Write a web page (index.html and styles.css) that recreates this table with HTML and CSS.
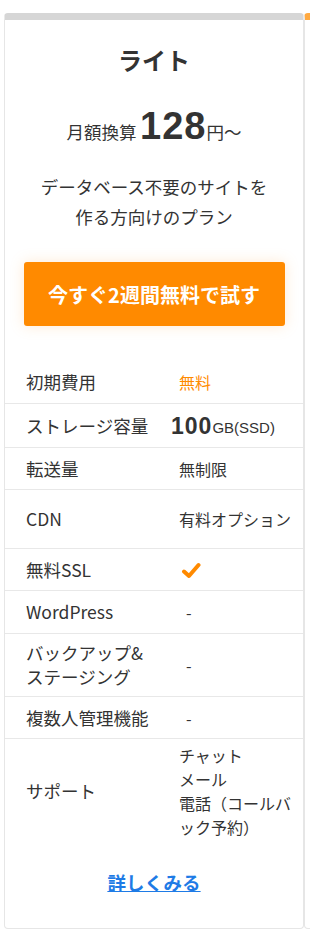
FILE: index.html
```html
<!DOCTYPE html>
<html lang="ja">
<head>
<meta charset="utf-8">
<link rel="stylesheet" href="styles.css">
</head>
<body>
<div class="plans">
  <section class="card card-lite">
    <h2 class="plan-name">ライト</h2>
    <p class="price"><span class="price-label">月額換算</span> <span class="price-num">128</span><span class="price-unit">円〜</span></p>
    <p class="desc">データベース不要のサイトを<br>作る方向けのプラン</p>
    <a class="cta" href="#">今すぐ2週間無料で試す</a>
    <div class="spec">
      <div class="lbl">初期費用</div><div class="val free">無料</div>
      <div class="lbl">ストレージ容量</div><div class="val"><span class="big">100</span><span class="unit">GB(SSD)</span></div>
      <div class="lbl">転送量</div><div class="val">無制限</div>
      <div class="lbl">CDN</div><div class="val">有料オプション</div>
      <div class="lbl">無料SSL</div><div class="val"><svg class="check" width="20" height="20" viewBox="0 0 20 20"><path d="M3 11.5 L8 16 L17.5 5" fill="none" stroke="#ff8a00" stroke-width="4" stroke-linecap="round" stroke-linejoin="round"/></svg></div>
      <div class="lbl">WordPress</div><div class="val dash">-</div>
      <div class="lbl">バックアップ&amp;<br>ステージング</div><div class="val dash">-</div>
      <div class="lbl">複数人管理機能</div><div class="val dash">-</div>
      <div class="lbl last">サポート</div><div class="val last multi">チャット<br>メール<br>電話（コールバック予約）</div>
    </div>
    <a class="more" href="#">詳しくみる</a>
  </section>
  <section class="card card-next"></section>
</div>
</body>
</html>
```

FILE: styles.css
```css
html, body {
  margin: 0;
  padding: 0;
  background: #fff;
  overflow: hidden;
}
body {
  font-family: "Noto Sans CJK JP", "Noto Sans", sans-serif;
  color: #333;
}
.plans {
  display: flex;
  padding: 13px 0 0 4px;
  overflow: hidden;
}
.card {
  flex: 0 0 300px;
  box-sizing: border-box;
  width: 300px;
  height: 916px;
  border: 1px solid #e6e6e6;
  border-top: 7px solid #d6d6d6;
  border-radius: 4px;
  display: flex;
  flex-direction: column;
  align-items: center;
}
.card-next {
  border-top-color: #ffa940;
}
.plan-name {
  margin: 22px 0 0;
  font-size: 24px;
  line-height: 36px;
  font-weight: 700;
}
.price {
  margin: 26px 0 0;
  line-height: 44px;
  height: 44px;
  white-space: nowrap;
}
.price-label {
  font-size: 17.5px;
}
.price-num {
  font-family: "Liberation Sans", Arial, sans-serif;
  font-weight: 700;
  font-size: 38px;
  letter-spacing: 1px;
}
.price-unit {
  font-size: 17.5px;
}
.desc {
  margin: 24px 0 0;
  font-size: 17.5px;
  line-height: 30px;
  text-align: center;
}
.cta {
  margin-top: 30px;
  width: 261px;
  height: 64px;
  display: flex;
  align-items: center;
  justify-content: center;
  background: #ff8a00;
  color: #fff;
  font-weight: 700;
  font-size: 20px;
  text-decoration: none;
  border-radius: 3px;
  box-shadow: 0 0 14px rgba(255, 170, 80, 0.25);
}
.spec {
  margin-top: 34px;
  align-self: stretch;
  display: grid;
  grid-template-columns: 174px 1fr;
  grid-template-rows: 44px 44px 42px 59px 42px 43px 63px 42px 104px;
}
.lbl, .val {
  display: flex;
  align-items: center;
  border-bottom: 1px solid #e8e8e8;
}
.lbl {
  padding-left: 21px;
  font-size: 17.5px;
  line-height: 24px;
}
.val {
  font-size: 16px;
  line-height: 24px;
  padding-right: 8px;
}
.last {
  border-bottom: none;
}
.free {
  color: #ff8a00;
}
.big {
  font-family: "Liberation Sans", Arial, sans-serif;
  font-weight: 700;
  font-size: 23px;
  letter-spacing: 1px;
  margin-left: -8px;
}
.unit {
  font-family: "Liberation Sans", Arial, sans-serif;
  font-size: 15px;
  margin-top: 4px;
}
.dash {
  padding-left: 7px;
}
.check {
  margin-left: 2px;
}
.multi {
  align-items: center;
}
.more {
  margin-top: 25px;
  color: #1e7be6;
  font-weight: 700;
  font-size: 18.5px;
  line-height: 28px;
  text-decoration: underline;
}
```
